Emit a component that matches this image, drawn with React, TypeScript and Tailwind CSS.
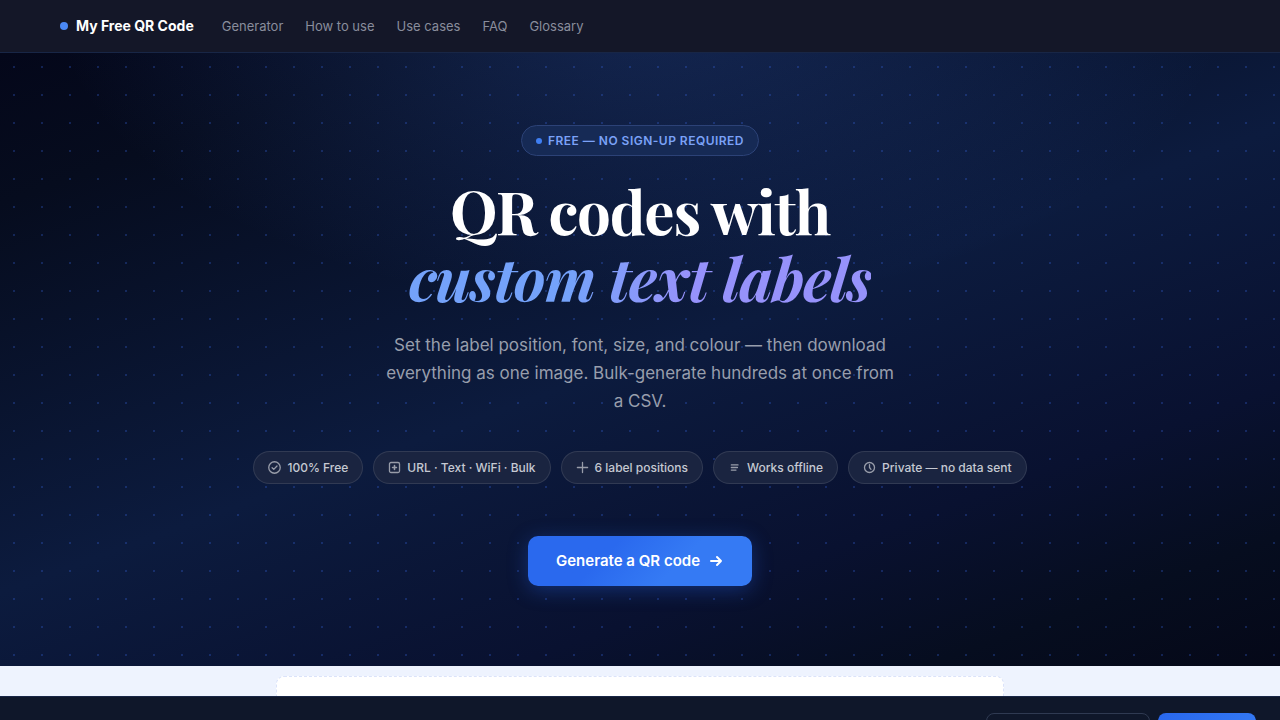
import { ReactNode } from "react";

const links = ["Generator", "How to use", "Use cases", "FAQ", "Glossary"];

function Icon({ size = 13, children }: { size?: number; children: ReactNode }) {
  return (
    <svg
      width={size}
      height={size}
      viewBox="0 0 14 14"
      fill="none"
      stroke="currentColor"
      strokeWidth="1.4"
      strokeLinecap="round"
      strokeLinejoin="round"
      className="shrink-0 text-white/55"
      aria-hidden="true"
    >
      {children}
    </svg>
  );
}

const features: { label: string; icon: ReactNode }[] = [
  {
    label: "100% Free",
    icon: (
      <>
        <circle cx="7" cy="7" r="6.2" />
        <path d="M4.4 7.2l1.8 1.8 3.5-3.6" />
      </>
    ),
  },
  {
    label: "URL · Text · WiFi · Bulk",
    icon: (
      <>
        <rect x="1.6" y="1.6" width="10.8" height="10.8" rx="1.6" />
        <path d="M7 4.9v4.2M4.9 7h4.2" strokeWidth="1.7" />
      </>
    ),
  },
  { label: "6 label positions", icon: <path d="M7 1.5v11M1.5 7h11" /> },
  { label: "Works offline", icon: <path d="M3.6 4.2h7.2M3.6 7h6.6M3.6 9.8h5" /> },
  {
    label: "Private — no data sent",
    icon: (
      <>
        <circle cx="7" cy="7" r="5.4" />
        <path d="M7 4v3l1.6 2" />
      </>
    ),
  },
];

function Header() {
  return (
    <header className="relative z-10 border-b border-[#182646] bg-[#141728]">
      <nav className="mx-auto flex h-13 max-w-[1160px] items-center gap-7" aria-label="Main">
        <a href="#top" className="flex items-center gap-2 text-sm font-bold text-white">
          <span className="size-2 rounded-full bg-[#4a88f5]" />
          My Free QR Code
        </a>
        <div className="flex items-center gap-[22px] text-[13px] leading-5 text-[#898d9c]">
          {links.map((l) => (
            <a key={l} href={"#" + l.toLowerCase().replace(/ /g, "-")}>
              {l}
            </a>
          ))}
        </div>
      </nav>
    </header>
  );
}

function Hero() {
  return (
    <section className="bg-[radial-gradient(circle,rgba(59,110,246,0.26)_1px,transparent_1px),radial-gradient(ellipse_46%_52%_at_50%_-10%,rgba(59,110,220,0.26),transparent_100%),linear-gradient(160deg,#04071a_0%,#060c1e_14%,#0c1b3e_50%,#091130_74%,#060d1f_88%,#050818_100%)] bg-[size:28px_28px,100%_100%,100%_100%]">
      <div className="flex flex-col items-center px-6 pt-18 pb-20 text-center">
        <p className="flex items-center gap-1.5 rounded-full border border-[#2c4277] bg-[#162a55] px-3.5 py-[5px] text-xs leading-[19px] font-semibold tracking-[0.04em] text-[#7ba2f8] uppercase">
          <span className="size-1.5 rounded-full bg-[#3f7ff3]" />
          Free — no sign-up required
        </p>
        <h1 className="mt-[21px] font-['Playfair_Display','Liberation_Serif',serif] text-[60px] leading-[67px] font-bold tracking-[-0.02em] text-white">
          QR codes with
          <br />
          <em className="bg-linear-to-r from-[#74a2fa] from-35% to-[#9692fb] to-60% bg-clip-text text-transparent">
            custom text labels
          </em>
        </h1>
        <p className="mt-5 max-w-[520px] text-[17px] leading-7 text-[#989eac]">
          Set the label position, font, size, and colour — then download everything as one image.
          Bulk-generate hundreds at once from a CSV.
        </p>
        <ul className="mt-9 flex flex-wrap justify-center gap-2.5">
          {features.map((f) => (
            <li
              key={f.label}
              className="flex items-center gap-1.5 rounded-full border border-white/10 bg-[#1a2440] px-3.5 py-[6px] text-xs leading-[19px] font-medium text-[#c5c9d2]"
            >
              <Icon>{f.icon}</Icon>
              {f.label}
            </li>
          ))}
        </ul>
        <a
          href="#generator"
          className="mt-13 flex items-center gap-2.5 rounded-[10px] bg-linear-135 from-[#2a69ee] from-35% to-[#357af4] to-65% px-7 py-[13px] text-[15px] leading-6 font-semibold text-white shadow-[0_4px_20px_rgba(37,99,235,0.35)]"
        >
          Generate a QR code
          <svg width="14" height="14" viewBox="0 0 14 14" fill="none" stroke="currentColor" strokeWidth="2" strokeLinecap="round" strokeLinejoin="round" aria-hidden="true">
            <path d="M1 7h10M7 3l4 4-4 4" />
          </svg>
        </a>
      </div>
    </section>
  );
}

export default function App() {
  return (
    <div id="top" className="flex h-screen flex-col overflow-hidden bg-[#eef3fe] font-['Inter',sans-serif]">
      <Header />
      <main className="min-h-0 flex-1 overflow-hidden">
        <Hero />
        <div className="px-6 pt-2.5">
          <div className="mx-auto h-24 max-w-[728px] rounded-lg border border-dashed border-[#dbe3fa] bg-white" />
        </div>
      </main>
      <aside className="h-6 shrink-0 overflow-hidden border-t border-[#182646] bg-[#0f172a]" aria-label="Cookie notice">
        <div className="flex justify-end gap-2 px-6 pt-4">
          <button type="button" aria-label="Decline" className="h-9 w-[164px] rounded-lg border border-[#2f3a52]" />
          <button type="button" aria-label="Accept" className="h-9 w-[98px] rounded-lg bg-linear-135 from-[#2967ec] to-[#367cf5]" />
        </div>
      </aside>
    </div>
  );
}
